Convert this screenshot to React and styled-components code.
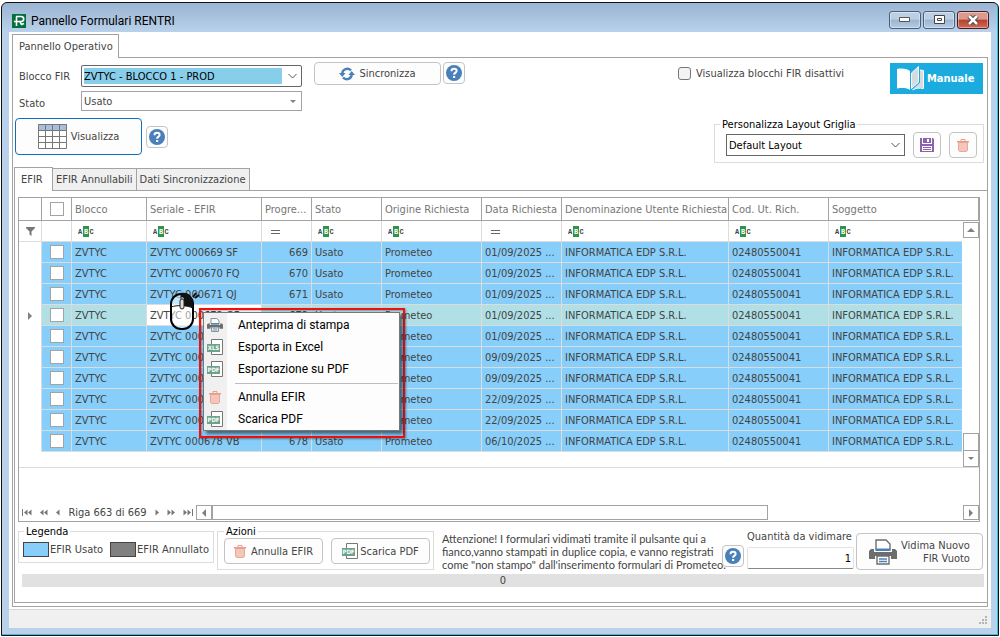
import React from "react";
import styled, { createGlobalStyle, css } from "styled-components";

const GlobalStyle = createGlobalStyle`
  * {
    box-sizing: border-box;
  }
  body {
    margin: 0;
    background: #fff;
    color: #444;
    font: 11px/13px "DejaVu Sans Condensed", Tahoma, "Liberation Sans", sans-serif;
  }
  button, input, select {
    font: inherit;
    color: inherit;
    margin: 0;
  }
  svg {
    display: block;
    flex: none;
  }
`;

const Desktop = styled.div`
  display: flex;
  min-height: 100vh;
  padding: 2px 1px 1px;
`;
const Window = styled.div`
  flex: 1;
  min-width: 0;
  display: flex;
  flex-direction: column;
  padding: 0 7px 7px;
  border: 1px solid #111;
  border-radius: 6px 6px 0 0;
  background: linear-gradient(#9ab5d3, #b9d1ea 29px);
  box-shadow: inset -1px -1px 0 #2fc4dc;
`;
const TitleBar = styled.header`
  display: flex;
  align-items: center;
  height: 29px;
  padding: 6px 2px 0 3px;
  gap: 5px;
`;
const Title = styled.h1`
  flex: 1;
  margin: 0;
  color: #000;
  font: 12px/16px Roboto, "Open Sans", sans-serif;
`;
const Captions = styled.div`
  display: flex;
  gap: 2px;
  margin-bottom: 2px;
`;
const CaptionButton = styled.button`
  display: flex;
  align-items: center;
  justify-content: center;
  width: 32px;
  height: 18px;
  padding: 0;
  border: 1px solid #4a5f7c;
  border-radius: 3px;
  box-shadow: inset 0 0 0 1px rgba(255, 255, 255, 0.4);
  background: linear-gradient(#bccfe3 45%, #9bb5d1 50%, #b5cce4);
  ${props =>
    props.$close &&
    css`
      border-color: #4c1a22;
      background: linear-gradient(#dc9a8d 45%, #b8402c 50%, #cf6b56);
    `}
`;
const Body = styled.main`
  flex: 1;
  display: flex;
  flex-direction: column;
  padding: 2px 3px 0;
  background: #fff;
`;
const Tabs = styled.div`
  display: flex;
  align-items: flex-end;
  position: relative;
  margin-bottom: -1px;
`;
const Tab = styled.button`
  height: 22px;
  padding: 0 3px;
  margin-bottom: 1px;
  border: 1px solid #a3a3a3;
  border-left: 0;
  border-bottom: 0;
  background: #f0f0f0;
  text-align: left;
  white-space: nowrap;
  ${props =>
    props.$active &&
    css`
      min-width: 39px;
      height: 24px;
      margin-bottom: 0;
      padding: 0 5px 1px 6px;
      border-left: 1px solid #a3a3a3;
      background: #fff;
    `}
`;
const Panel = styled.section`
  flex: 1;
  display: flex;
  flex-direction: column;
  padding: 0 0 3px 1px;
  border: 1px solid #a3a3a3;
`;
const StatusBar = styled.footer`
  display: flex;
  align-items: flex-end;
  justify-content: flex-end;
  height: 19px;
  margin: 2px -3px 0;
  padding: 2px;
  border-top: 1px solid #d7d7d7;
  background: #f0f0f0;
`;

const Filters = styled.div`
  display: flex;
  justify-content: space-between;
  padding: 4px 3px 12px 1px;
`;
const FilterRows = styled.div`
  display: flex;
  flex-direction: column;
`;
const FilterRow = styled.div`
  display: flex;
  align-items: ${props => props.$align || "flex-start"};
  height: ${props => props.$height};
  margin-bottom: ${props => props.$below || "0"};
`;
const FieldLabel = styled.label`
  width: 66px;
  padding: 6px 0 4px 4px;
`;
const SelectBox = styled.div`
  display: flex;
  position: relative;
  width: ${props => props.$width};
  height: ${props => props.$height};
  padding: 2px;
  border: 1px solid ${props => props.$border || "#a3a3a3"};
  border-radius: ${props => props.$radius || "0"};
  background: #fff;
  svg {
    position: absolute;
    right: 4px;
    top: 50%;
    margin-top: -3px;
    pointer-events: none;
  }
`;
const Select = styled.select`
  appearance: none;
  flex: 1;
  margin-right: ${props => (props.$marked ? "17px" : "0")};
  padding: 0;
  border: 0;
  outline: 0;
  color: ${props => props.$color || "#000"};
  background: ${props => (props.$marked ? "#87ceeb" : "transparent")};
`;
const SyncButtons = styled.div`
  display: flex;
  align-self: flex-start;
  gap: 2px;
  padding-left: 12px;
`;
const Button = styled.button`
  display: flex;
  align-items: center;
  justify-content: center;
  flex: none;
  gap: ${props => props.$gap || "4px"};
  width: ${props => props.$width};
  height: ${props => props.$height};
  padding: 0;
  border: 1px solid ${props => (props.$focus ? "#0f6fbe" : "#c4c4c4")};
  border-radius: 4px;
  background: #fdfdfd;
  white-space: nowrap;
  text-align: right;
`;
const ViewButtons = styled.div`
  display: flex;
  align-items: center;
  gap: 4px;
`;
const FilterSide = styled.div`
  display: flex;
  flex-direction: column;
  justify-content: space-between;
  align-items: flex-end;
  margin-bottom: -8px;
`;
const SideTop = styled.div`
  display: flex;
  align-items: flex-start;
  gap: 46px;
  padding: 1px 1px 0 0;
`;
const CheckLabel = styled.label`
  display: flex;
  align-items: center;
  gap: 5px;
  padding-top: 4px;
  white-space: nowrap;
`;
const Check = styled.input`
  appearance: none;
  width: ${props => (props.$round ? "13px" : "14px")};
  height: ${props => (props.$round ? "13px" : "14px")};
  margin: 0;
  border: 1px solid ${props => (props.$round ? "#777" : "#a3a3a3")};
  border-radius: ${props => (props.$round ? "3px" : "0")};
  background: ${props => (props.$round ? "#f3f3f3" : "#fff")};
  vertical-align: middle;
`;
const ManualButton = styled.button`
  display: flex;
  align-items: center;
  gap: 3px;
  width: 93px;
  height: 31px;
  padding: 0 7px;
  border: 0;
  background: #1babdf;
  color: #fff;
  font-weight: bold;
`;
const Group = styled.fieldset`
  flex: none;
  width: ${props => props.$width};
  min-width: 0;
  height: ${props => props.$height};
  margin: 0;
  padding: ${props => props.$pad || "0"};
  border: 1px solid #dcdcdc;
`;
const Legend = styled.legend`
  margin-left: ${props => props.$indent || "1px"};
  padding: 0 2px;
  color: #000;
  line-height: 13px;
`;
const LayoutRow = styled.div`
  display: flex;
  align-items: center;
  gap: 8px;
  height: 26px;
`;

const TabPage = styled.section`
  flex: 1;
  display: flex;
  flex-direction: column;
  padding: 6px 7px 0 3px;
  border: 1px solid #a3a3a3;
  border-right: 0;
`;
const Grid = styled.div`
  flex: 1;
  display: flex;
  flex-direction: column;
  justify-content: space-between;
  position: relative;
  padding-bottom: 1px;
  border: 1px solid #a3a3a3;
`;
const Table = styled.table`
  width: 100%;
  table-layout: fixed;
  border-collapse: separate;
  border-spacing: 0;
`;
const Th = styled.th`
  height: 23px;
  padding: 0 3px;
  border-right: 1px solid #a3a3a3;
  border-bottom: 1px solid #a3a3a3;
  color: #767676;
  font-weight: normal;
  text-align: ${props => props.$align || "left"};
  white-space: nowrap;
  overflow: hidden;
`;
const Td = styled.td`
  height: 21px;
  padding: 0 3px;
  border-right: 1px solid #dcdcdc;
  border-bottom: 1px solid #dcdcdc;
  background: ${props => props.$bg || "#87cefa"};
  color: #444;
  text-align: ${props => props.$align || "left"};
  white-space: nowrap;
  overflow: hidden;
  &:nth-child(11) {
    border-right: 0;
  }
`;
const FilterCell = styled(Td)`
  padding-left: 6px;
  background: #fff;
`;
const Indicator = styled.td`
  padding: 0 7px;
  border-right: 1px solid #dcdcdc;
  border-bottom: ${props => (props.$line ? "1px solid #dcdcdc" : "0")};
`;
const EmptyCell = styled.td`
  height: 16px;
  padding: 0;
  border-bottom: 1px solid #dcdcdc;
`;
const ScrollCell = styled.td`
  height: 1px;
  padding: 0;
  border-bottom: 1px solid #dcdcdc;
`;
const VScroll = styled.div`
  display: flex;
  flex-direction: column;
  height: 100%;
  padding: 1px 0 0 1px;
`;
const ScrollButton = styled.button`
  display: flex;
  align-items: center;
  justify-content: center;
  flex: none;
  width: 16px;
  height: ${props => props.$height || "16px"};
  padding: 0;
  border: 1px solid #a3a3a3;
  background: #fff;
`;
const VThumb = styled.div`
  height: 17px;
  margin-top: auto;
  border: 1px solid #a3a3a3;
  border-bottom: 0;
`;
const Navigator = styled.div`
  display: flex;
  align-items: center;
  height: 15px;
`;
const Records = styled.div`
  display: flex;
  align-items: center;
  justify-content: space-between;
  width: 177px;
  padding: 0 3px;
  white-space: nowrap;
`;
const NavButton = styled.button`
  padding: 0;
  border: 0;
  background: none;
`;
const HTrack = styled.div`
  flex: 1;
  height: 15px;
`;
const HThumb = styled.div`
  width: 74%;
  height: 15px;
  border: 1px solid #a3a3a3;
`;

const MenuFrame = styled.div`
  position: absolute;
  left: 180px;
  top: 110px;
  width: 206px;
  height: 130px;
  padding: 2px;
  border: 2px solid #f01010;
  box-shadow: 1px 1px 2px rgba(0, 0, 0, 0.4), inset 1px 1px 2px rgba(0, 0, 0, 0.3);
`;
const Menu = styled.ul`
  width: 197px;
  margin: 0;
  padding: 1px 0 0;
  list-style: none;
  border: 1px solid #777;
  background: linear-gradient(90deg, #f0f0f0 22px, #fdfdfd 24px);
  box-shadow: 3px 3px 3px rgba(0, 0, 0, 0.5);
`;
const MenuItem = styled.button`
  display: flex;
  align-items: center;
  width: 100%;
  height: 22px;
  padding: 0 0 0 3px;
  gap: 15px;
  border: 0;
  background: none;
  color: #000;
  font: 12px/16px Roboto, "Open Sans", sans-serif;
`;
const MenuLine = styled.li`
  height: 1px;
  margin: 3px 1px 2px 31px;
  background: #bdbdbd;
`;
const Pointer = styled.div`
  position: absolute;
  left: 150px;
  top: 93px;
`;

const Actions = styled.div`
  display: flex;
  align-items: flex-start;
  height: 52px;
  padding-top: 3px;
`;
const LegendItems = styled.div`
  display: flex;
  align-items: center;
  white-space: nowrap;
`;
const Swatch = styled.span`
  width: 26px;
  height: 15px;
  margin: ${props => props.$margin || "0 1px 0 0"};
  border: 1px solid #444;
  background: ${props => props.$color};
`;
const ActionGroup = styled(Group)`
  margin-left: 3px;
`;
const ActionButtons = styled.div`
  display: flex;
  gap: 8px;
`;
const Note = styled.p`
  flex: 1;
  min-width: 0;
  margin: 7px 0 0 8px;
  font-family: Lato, "Liberation Sans", sans-serif;
  white-space: pre;
`;
const HelpSlot = styled.div`
  margin-top: 20px;
`;
const Quantity = styled.label`
  display: flex;
  flex: none;
  flex-direction: column;
  gap: 4px;
  width: 107px;
  margin: 5px 2px 0 3px;
  white-space: nowrap;
`;
const NumberInput = styled.input`
  width: 100%;
  height: 22px;
  padding: 0 2px;
  border: 1px solid #e3e3e3;
  border-bottom-color: #888;
  border-radius: 2px;
  color: #000;
  text-align: right;
`;
const ButtonSlot = styled.div`
  margin: 8px -3px 0 0;
`;
const Progress = styled.div`
  height: 13px;
  margin: 0 -4px 15px 4px;
  background: #e1e1e1;
  text-align: center;
`;

const AppLogo = () => (
  <svg width="14" height="14" viewBox="0 0 14 14">
    <path fill="#04713c" d="M0 0h14v14H0z" />
    <path fill="none" stroke="#fff" strokeWidth="1.6" d="M4 2.500h5c3.600 0 3.600 5 0 5H2M4.500 2.500V12M8 8l1.500 2.500 2.500-1" />
  </svg>
);
const Chevron = () => (
  <svg width="9" height="6" viewBox="0 0 9 6">
    <path fill="none" stroke="#555" d="M.5 1l4 4 4-4" />
  </svg>
);
const Arrow = ({ dir = "down" }) => {
  const paths = { down: "M1 2h6L4 5z", up: "M0 6h8L4 2z", left: "M6 0v8L2 4z", right: "M2 0v8l4-4z" };
  return (
    <svg width="8" height="8" viewBox="0 0 8 8">
      <path fill="#808080" d={paths[dir]} />
    </svg>
  );
};
const Steps = ({ count, bar, back }) => {
  const width = count * 4 + (bar ? 2 : 0);
  return (
    <svg width={width} height="7" viewBox={`0 0 ${width} 7`}>
      <g fill="#777" transform={back ? undefined : `translate(${width} 0) scale(-1 1)`}>
        {bar && <path d="M0 0h1v7H0z" />}
        {[...Array(count)].map((_, i) => (
          <path key={i} transform={`translate(${i * 4 + (bar ? 2 : 0)} 0)`} d="M3.500 .5v6L0 3.500z" />
        ))}
      </g>
    </svg>
  );
};
const HelpIcon = () => (
  <svg width="16" height="16" viewBox="0 0 16 16">
    <circle cx="8" cy="8" r="8" fill="#4a80ba" />
    <path fill="none" stroke="#fff" strokeWidth="2" d="M5.500 6.200C5.500 3 10.600 3.200 10.600 6c0 1.800-2.500 1.600-2.500 3.800" />
    <path fill="#fff" d="M7 11h2.200v2H7z" />
  </svg>
);
const SyncIcon = () => (
  <svg width="16" height="14" viewBox="0 0 16 14">
    <path fill="none" stroke="#4a80ba" strokeWidth="2.400" d="M3.200 7C3.200 1.800 9 .3 12 3.500M12.800 7c0 5.200-5.800 6.700-8.800 3.500" />
    <path fill="#4a80ba" d="M0 6h6.600L3.300 10zM16 8H9.400l3.300-4z" />
  </svg>
);
const TableIcon = () => (
  <svg width="29" height="25" viewBox="0 0 29 25">
    <path fill="#fff" d="M0 0h29v25H0z" />
    <path fill="#a7bedc" d="M0 0h29v7H0z" />
    <path fill="none" stroke="#777" d="M.5 .5h28v24H.5zM0 6.500h29M0 12.500h29M0 18.500h29M7.500 0v25M14.500 0v25M21.500 0v25" />
  </svg>
);
const BookIcon = () => (
  <svg width="27" height="25" viewBox="0 0 27 25">
    <path fill="#fff" d="M0 3c5-1 9-.5 13 2v19c-3-2-7-2.500-13-1.500z" />
    <path fill="#d5dbde" d="M14.500 22.500V7L22 .5v15.500z" />
    <path fill="#d5dbde" d="M15 24l8-7.500V4l3 .5V22c-4-.5-8 0-11 2z" />
    <path fill="none" stroke="#fff" d="M14.500 22.500V7L21.500 .5v15.500zM15.500 24c3-2 7-2.300 11-1.500V4.500L23 4" />
  </svg>
);
const SaveIcon = () => (
  <svg width="14" height="14" viewBox="0 0 14 14">
    <path fill="#8c62ae" d="M0 0h2v6h10V0h1l1 1v13H0zM3 0h8v5H3z" />
    <path fill="#fff" d="M7 1h2v3H7zM2 8h10v5H2z" />
    <path fill="#8c62ae" d="M3 9h8v1H3zM3 11h8v1H3z" />
  </svg>
);
const TrashIcon = () => (
  <svg width="12" height="13" viewBox="0 0 12 13">
    <path fill="#f3c6b9" stroke="#e9a896" d="M1.500 3.500h9v8l-1 1h-7l-1-1z" />
    <path fill="#e59e8a" d="M0 2h12v1.500H0zM4 0h4v1H4zM3.500 .5h1V2h-1zM7.500 .5h1V2h-1z" />
  </svg>
);
const FileIcon = ({ kind }) => (
  <svg width="16" height="16" viewBox="0 0 16 16">
    <path fill="#fff" stroke="#777" d="M4.500 5V.5h11v15h-11V13" />
    <path fill="#6ba28b" d="M0 5h13v8H0z" />
    <text x="6.500" y="11.400" fill="#fff" fontSize="6" fontWeight="bold" textAnchor="middle" fontFamily="DejaVu Sans Condensed, sans-serif">
      {kind}
    </text>
  </svg>
);
const PrinterIcon = ({ size = 16 }) => (
  <svg width={size} height={size - 2} viewBox="0 0 28 26" preserveAspectRatio="none">
    <path fill="#6d6d6d" d="M0 12l2-2h3v3h18v-3h3l2 2v8h-6v-3H6v3H0z" />
    <path fill="#fff" stroke="#6d6d6d" strokeWidth="1.400" d="M7 11V1h10l4 4v6z" />
    <path fill="#4a80ba" d="M7 9.500h14V12H7z" />
    <path fill="#fff" stroke="#6d6d6d" strokeWidth="1.400" d="M8 17h12v8H8z" />
    <path stroke="#4a80ba" strokeWidth="1.400" d="M10 20h8M10 22.500h8" />
  </svg>
);
const AbcIcon = () => (
  <svg width="16" height="11" viewBox="0 0 16 11">
    <path fill="#2f9448" d="M5 0h6v11H5z" />
    <g fontSize="7" fontWeight="bold" fontFamily="Liberation Mono, monospace">
      <text x="0" y="8" fill="#444">A</text>
      <text x="6" y="8" fill="#fff">B</text>
      <text x="11.500" y="8" fill="#444">C</text>
    </g>
  </svg>
);
const EqualsIcon = () => (
  <svg width="16" height="11" viewBox="0 0 16 11">
    <path fill="#666" d="M3 4h9v1H3zM3 7h9v1H3z" />
  </svg>
);
const FunnelIcon = () => (
  <svg width="9" height="9" viewBox="0 0 9 9">
    <path fill="#777" d="M0 0h9v1L5.500 4.500V9L3.500 7.500v-3L0 1z" />
  </svg>
);
const MouseIcon = () => (
  <svg width="32" height="40" viewBox="0 0 32 40">
    <rect x="2" y="3" width="22" height="35" rx="10" fill="#fff" fillOpacity=".5" stroke="#000" strokeWidth="2" />
    <path fill="#111" d="M12 2c8-1 12 4 12 11v4c-4-2-7-2-9-2V9c0-2-1-3-3-3z" />
    <path fill="none" stroke="#111" d="M2 16c6-2 15-2 22 1M12 3v5" />
    <rect x="11" y="8" width="4" height="10" rx="2" fill="#ddd" stroke="#222" />
    <path stroke="#111" strokeWidth="2" d="M24 6l3-4M26 7l4-3" />
  </svg>
);

const columns = [
  { title: "Blocco", width: 75, filter: "abc" },
  { title: "Seriale - EFIR", width: 115, filter: "abc" },
  { title: "Progre...", width: 50, filter: "eq" },
  { title: "Stato", width: 70, filter: "abc" },
  { title: "Origine Richiesta", width: 100, filter: "abc" },
  { title: "Data Richiesta", width: 80, filter: "eq" },
  { title: "Denominazione Utente Richiesta", width: 167, filter: "abc" },
  { title: "Cod. Ut. Rich.", width: 100, filter: "abc" },
  { title: "Soggetto", filter: "abc" }
];

const rows = [
  { number: 669, suffix: "SF", date: "01/09/2025 ..." },
  { number: 670, suffix: "FQ", date: "01/09/2025 ..." },
  { number: 671, suffix: "QJ", date: "01/09/2025 ..." },
  { number: 672, suffix: "GF", date: "01/09/2025 ...", current: true },
  { number: 673, suffix: "LS", date: "01/09/2025 ..." },
  { number: 674, suffix: "PD", date: "09/09/2025 ..." },
  { number: 675, suffix: "XC", date: "09/09/2025 ..." },
  { number: 676, suffix: "NK", date: "22/09/2025 ..." },
  { number: 677, suffix: "HT", date: "22/09/2025 ..." },
  { number: 678, suffix: "VB", date: "06/10/2025 ..." }
];

const Help = () => (
  <Button $width="22px" $height="22px" aria-label="Aiuto">
    <HelpIcon />
  </Button>
);

const ContextMenu = () => (
  <MenuFrame>
    <Menu>
      <li><MenuItem><PrinterIcon />Anteprima di stampa</MenuItem></li>
      <li><MenuItem><FileIcon kind="XLS" />Esporta in Excel</MenuItem></li>
      <li><MenuItem><FileIcon kind="PDF" />Esportazione su PDF</MenuItem></li>
      <MenuLine />
      <li><MenuItem><svg width="16" height="13" viewBox="-2 0 16 13"><TrashIcon /></svg>Annulla EFIR</MenuItem></li>
      <li><MenuItem><FileIcon kind="PDF" />Scarica PDF</MenuItem></li>
    </Menu>
  </MenuFrame>
);

const EfirGrid = () => (
  <Grid>
    <Table>
      <colgroup>
        <col width="23" />
        <col width="30" />
        {columns.map(col => (
          <col key={col.title} width={col.width} />
        ))}
        <col width="17" />
      </colgroup>
      <thead>
        <tr>
          <Th />
          <Th $align="center"><Check type="checkbox" aria-label="Seleziona tutto" /></Th>
          {columns.map(col => (
            <Th key={col.title} colSpan={col.width ? 1 : 2}>{col.title}</Th>
          ))}
        </tr>
      </thead>
      <tbody>
        <tr>
          <Indicator $line><FunnelIcon /></Indicator>
          <FilterCell />
          {columns.map(col => (
            <FilterCell key={col.title}>
              {col.filter === "abc" ? <AbcIcon /> : <EqualsIcon />}
            </FilterCell>
          ))}
          <ScrollCell rowSpan={rows.length + 2}>
            <VScroll>
              <ScrollButton aria-label="Su"><Arrow dir="up" /></ScrollButton>
              <VThumb />
              <ScrollButton aria-label="Giù" $height="17px"><Arrow /></ScrollButton>
            </VScroll>
          </ScrollCell>
        </tr>
        {rows.map(row => {
          const bg = row.current ? "#b0e0e6" : "#87cefa";
          return (
            <tr key={row.number}>
              <Indicator>{row.current && <Arrow dir="right" />}</Indicator>
              <Td $bg={bg} $align="center">
                <Check type="checkbox" aria-label={`Seleziona ${row.number}`} />
              </Td>
              <Td $bg={bg}>ZVTYC</Td>
              <Td $bg={row.current ? "#fff" : bg}>ZVTYC 000{row.number} {row.suffix}</Td>
              <Td $bg={bg} $align="right">{row.number}</Td>
              <Td $bg={bg}>Usato</Td>
              <Td $bg={bg}>Prometeo</Td>
              <Td $bg={bg}>{row.date}</Td>
              <Td $bg={bg}>INFORMATICA EDP S.R.L.</Td>
              <Td $bg={bg}>02480550041</Td>
              <Td $bg={bg}>INFORMATICA EDP S.R.L.</Td>
            </tr>
          );
        })}
        <tr>
          <EmptyCell colSpan={11} />
        </tr>
      </tbody>
    </Table>
    <Navigator>
      <Records>
        <NavButton aria-label="Prima"><Steps count={2} bar back /></NavButton>
        <NavButton aria-label="Pagina precedente"><Steps count={2} back /></NavButton>
        <NavButton aria-label="Precedente"><Steps count={1} back /></NavButton>
        <span>Riga 663 di 669</span>
        <NavButton aria-label="Successiva"><Steps count={1} /></NavButton>
        <NavButton aria-label="Pagina successiva"><Steps count={2} /></NavButton>
        <NavButton aria-label="Ultima"><Steps count={2} bar /></NavButton>
      </Records>
      <ScrollButton $height="15px" aria-label="Sinistra"><Arrow dir="left" /></ScrollButton>
      <HTrack><HThumb /></HTrack>
      <ScrollButton $height="15px" aria-label="Destra"><Arrow dir="right" /></ScrollButton>
    </Navigator>
    <Pointer><MouseIcon /></Pointer>
    <ContextMenu />
  </Grid>
);

const App = () => (
  <Desktop>
    <GlobalStyle />
    <Window>
      <TitleBar>
        <AppLogo />
        <Title>Pannello Formulari RENTRI</Title>
        <Captions>
          <CaptionButton aria-label="Riduci">
            <svg width="12" height="6"><path fill="#fff" stroke="#555" d="M.5 .5h10v4H.5z" /></svg>
          </CaptionButton>
          <CaptionButton aria-label="Ingrandisci">
            <svg width="11" height="10"><path fill="#fff" stroke="#444" d="M.5 .5h10v8H.5zM3.500 3.500h4v2h-4z" /></svg>
          </CaptionButton>
          <CaptionButton $close aria-label="Chiudi">
            <svg width="12" height="10" viewBox="0 0 12 10">
              <path stroke="#444" strokeWidth="4.500" d="M2 1l8 8M10 1L2 9" />
              <path stroke="#fff" strokeWidth="2.500" d="M2 1l8 8M10 1L2 9" />
            </svg>
          </CaptionButton>
        </Captions>
      </TitleBar>
      <Body>
        <Tabs>
          <Tab $active>Pannello Operativo</Tab>
        </Tabs>
        <Panel>
          <Filters>
            <FilterRows>
              <FilterRow $align="flex-end" $height="25px" $below="4px">
                <FieldLabel htmlFor="blocco">Blocco FIR</FieldLabel>
                <SelectBox $width="221px" $height="22px" $border="#666" $radius="2px">
                  <Select id="blocco" $marked>
                    <option>ZVTYC - BLOCCO 1 - PROD</option>
                  </Select>
                  <Chevron />
                </SelectBox>
                <SyncButtons>
                  <Button $width="127px" $height="23px"><SyncIcon />Sincronizza</Button>
                  <Help />
                </SyncButtons>
              </FilterRow>
              <FilterRow $height="20px" $below="7px">
                <FieldLabel htmlFor="stato">Stato</FieldLabel>
                <SelectBox $width="221px" $height="20px">
                  <Select id="stato" $color="#444">
                    <option>Usato</option>
                  </Select>
                  <Arrow />
                </SelectBox>
              </FilterRow>
              <ViewButtons>
                <Button $width="127px" $height="37px" $focus><TableIcon />Visualizza</Button>
                <Help />
              </ViewButtons>
            </FilterRows>
            <FilterSide>
              <SideTop>
                <CheckLabel>
                  <Check type="checkbox" $round />
                  Visualizza blocchi FIR disattivi
                </CheckLabel>
                <ManualButton><BookIcon />Manuale</ManualButton>
              </SideTop>
              <Group $width="270px" $height="45px" $pad="1px 6px 0 11px">
                <Legend $indent="-6px">Personalizza Layout Griglia</Legend>
                <LayoutRow>
                  <SelectBox $width="180px" $height="22px" $border="#666">
                    <Select aria-label="Layout griglia">
                      <option>Default Layout</option>
                    </Select>
                    <Chevron />
                  </SelectBox>
                  <Button $width="28px" $height="26px" aria-label="Salva"><SaveIcon /></Button>
                  <Button $width="28px" $height="26px" aria-label="Elimina"><TrashIcon /></Button>
                </LayoutRow>
              </Group>
            </FilterSide>
          </Filters>
          <Tabs>
            <Tab $active>EFIR</Tab>
            <Tab>EFIR Annullabili</Tab>
            <Tab>Dati Sincronizzazione</Tab>
          </Tabs>
          <TabPage>
            <EfirGrid />
            <Actions>
              <Group $width="196px" $height="38px" $pad="4px 4px 0">
                <Legend>Legenda</Legend>
                <LegendItems>
                  <Swatch $color="#87cefa" />
                  EFIR Usato
                  <Swatch $color="#808080" $margin="0 1px 0 7px" />
                  EFIR Annullato
                </LegendItems>
              </Group>
              <ActionGroup $width="217px" $height="45px" $pad="0 3px 0 6px">
                <Legend $indent="0">Azioni</Legend>
                <ActionButtons>
                  <Button $width="99px" $height="26px" $gap="5px"><TrashIcon />Annulla EFIR</Button>
                  <Button $width="99px" $height="26px" $gap="2px"><FileIcon kind="PDF" />Scarica PDF</Button>
                </ActionButtons>
              </ActionGroup>
              <Note>
                {"Attenzione! I formulari vidimati tramite il pulsante qui a\nfianco,vanno stampati in duplice copia, e vanno registrati\ncome \"non stampo\" dall'inserimento formulari di Prometeo."}
              </Note>
              <HelpSlot><Help /></HelpSlot>
              <Quantity>
                Quantità da vidimare
                <NumberInput defaultValue="1" />
              </Quantity>
              <ButtonSlot>
                <Button $width="127px" $height="37px">
                  <PrinterIcon size={28} />
                  <span>Vidima Nuovo<br />FIR Vuoto</span>
                </Button>
              </ButtonSlot>
            </Actions>
            <Progress role="progressbar" aria-label="Avanzamento" aria-valuenow={0}>0</Progress>
          </TabPage>
        </Panel>
        <StatusBar>
          <svg width="10" height="10" fill="#b5b5b5">
            <path d="M6 0h2v2H6zM3 3h2v2H3zM6 3h2v2H6zM0 6h2v2H0zM3 6h2v2H3zM6 6h2v2H6z" />
          </svg>
        </StatusBar>
      </Body>
    </Window>
  </Desktop>
);

export default App;
